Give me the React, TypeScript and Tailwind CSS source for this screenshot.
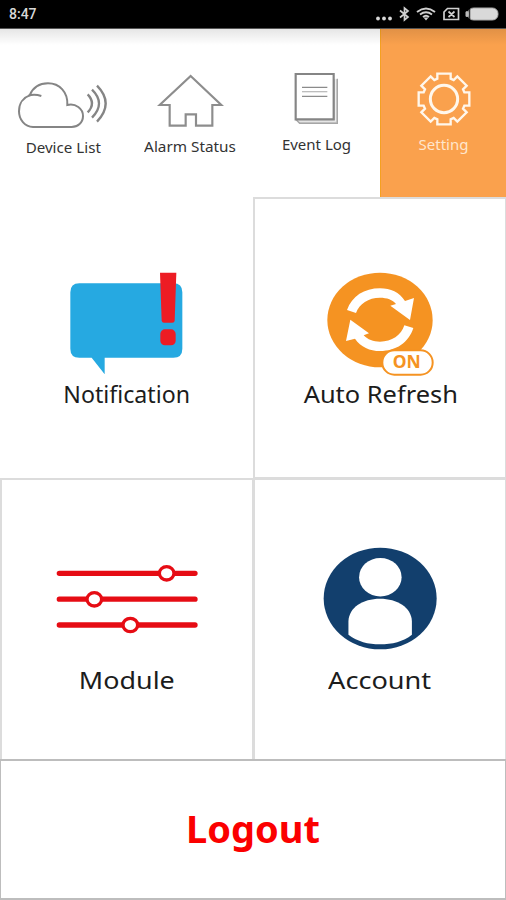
import clsx from 'clsx';
import type { ReactNode } from 'react';

const CloudIcon = () => (
  <svg viewBox="53 65 270 150" className="h-[50px] w-[90px]" fill="none" stroke="#858585" strokeWidth="6">
    <path d="M98 203 C73 202 56 181 56 156 C56 131 70 114 88 108 C98 84 119 72 143 72 C178 72 203 99 201 137 C226 131 248 148 248 170 C248 190 232 203 214 203 Z" />
    <path d="M84 109 Q102 103 123 110" />
    <path d="M262 105 Q288 132 262 159" strokeWidth="7" />
    <path d="M275 91 Q317 132 275 175" strokeWidth="7" />
    <path d="M290 79 Q342 132 290 187" strokeWidth="7" />
  </svg>
);

const HomeIcon = () => (
  <svg viewBox="81 42 201 162" className="h-[54px] w-[67px]" fill="none" stroke="#8d8d8d" strokeWidth="6.5">
    <path d="M182 48 L274 135 H247 V197 H198 V163 H167 V197 H119 V135 H89 Z" />
  </svg>
);

const BookIcon = () => (
  <svg viewBox="102 36 135 162" className="h-[54px] w-[45px]" fill="none">
    <path d="M107 178 L118 191 H232 V58 H222 V178 Z" fill="#c9c9c9" />
    <path d="M227 56 V183 H111" stroke="#eee" strokeWidth="4" />
    <path d="M232 56 V190 H119 L107 178" stroke="#a6a6a6" strokeWidth="4" />
    <path d="M107 42 H221 V178 H107 Z" fill="#fff" stroke="#858585" strokeWidth="6.5" />
    <path d="M126 82 H202 M126 109 H202" stroke="#8b8b8b" strokeWidth="4" />
    <path d="M126 95 H202" stroke="#bdbdbd" strokeWidth="4" />
  </svg>
);

const GearIcon = () => (
  <svg viewBox="-81 -81 162 162" className="size-[54px]" fill="none" stroke="#fff7ec">
    <path
      strokeWidth="7"
      d="M-20 -76 H20 V-61 L29 -57 L40 -68 L68 -40 L57 -29 L61 -20 H76 V20 H61 L57 29 L68 40 L40 68 L29 57 L20 61 V76 H-20 V61 L-29 57 L-40 68 L-68 40 L-57 29 L-61 20 H-76 V-20 H-61 L-57 -29 L-68 -40 L-40 -68 L-29 -57 L-20 -61 Z"
    />
    <circle r="41" strokeWidth="9" />
  </svg>
);

const NotificationIcon = () => (
  <svg viewBox="90 36 339 309" className="h-[103px] w-[113px]">
    <path
      fill="#26a9e1"
      d="M118 70 H400 Q427 70 427 97 V266 Q427 293 400 293 H194 V343 L155 293 H118 Q91 293 91 266 V97 Q91 70 118 70 Z"
    />
    <path fill="#ed1c24" d="M360 38 H409 L404 182 Q403 188 397 188 H372 Q366 188 365 182 Z" />
    <rect x="361" y="208" width="46" height="48" rx="14" fill="#ed1c24" />
  </svg>
);

const RefreshIcon = () => (
  <svg viewBox="112 36 321 312" className="h-[104px] w-[107px]">
    <ellipse cx="271" cy="180" rx="158" ry="142" fill="#f59322" />
    <path
      fill="#fff"
      d="M172 150 C187 108 224 85 271 85 C303 85 329 97 346 123 L373 114 L361 180 L302 137 L319 132 C309 119 292 113 271 113 C236 113 209 131 199 159 Z"
    />
    <path
      fill="#fff"
      d="M371 204 C357 248 319 273 271 273 C241 273 213 261 196 236 L169 243 L182 179 L238 220 L222 226 C234 239 251 245 271 245 C306 245 335 226 344 196 Z"
    />
    <rect x="278" y="271" width="151" height="73" rx="36" fill="#fff" stroke="#f59322" strokeWidth="6" />
    <text
      x="351"
      y="325"
      textAnchor="middle"
      textLength="84"
      lengthAdjust="spacingAndGlyphs"
      fill="#f59322"
      fontFamily="Noto Sans, sans-serif"
      fontWeight="700"
      fontSize="51"
    >
      ON
    </text>
  </svg>
);

const ModuleIcon = () => (
  <svg viewBox="48 42 426 210" className="h-[70px] w-[142px]" stroke="#e60c14">
    <path d="M58 70 H465 M58 147.5 H465 M58 225 H465" strokeWidth="16" strokeLinecap="round" />
    <g fill="#fff" strokeWidth="10">
      <ellipse cx="380" cy="70" rx="22" ry="20" />
      <ellipse cx="163" cy="148" rx="22" ry="20" />
      <ellipse cx="271" cy="225" rx="22" ry="20" />
    </g>
  </svg>
);

const AccountIcon = () => (
  <svg viewBox="99 37 345 310" className="h-[103px] w-[115px]">
    <ellipse cx="270.5" cy="192" rx="170" ry="153" fill="#123f6d" />
    <ellipse cx="271" cy="128" rx="64" ry="58" fill="#fff" />
    <path
      fill="#fff"
      d="M175 301 V260 C177 219 218 193 270 193 C322 193 364 219 366 260 V301 C340 322 306 330 270 330 C234 330 203 322 175 301 Z"
    />
  </svg>
);

const StatusBar = () => (
  <div className="flex h-[29px] items-center justify-between border-b border-[#555] bg-black pr-1.5 pl-[9px]">
    <span className="pt-px font-['Roboto',sans-serif] text-[14px] font-medium text-[#d8d8d8]">8:47</span>
    <svg viewBox="0 0 126 18" className="h-[18px] w-[126px]" fill="none" stroke="#d0d0d0">
      <g fill="#d8d8d8" stroke="none">
        <circle cx="4" cy="13.5" r="1.9" />
        <circle cx="10" cy="13.5" r="1.9" />
        <circle cx="16" cy="13.5" r="1.9" />
      </g>
      <path d="M26 5.500 L34 12 L30.500 15 V3 L34 6 L26 12.500" strokeWidth="1.7" />
      <path d="M43 7 Q52 0 61 7 M46 9.500 Q52 5 58 9.500 M49 12 Q52 9.500 55 12" strokeWidth="1.9" />
      <path d="M49.500 12.500 L52 15.500 L54.500 12.500 Z" fill="#d0d0d0" stroke="none" />
      <path d="M73.500 3.500 H84.500 V14.500 H70 V7 Z M74.500 6.500 L80.500 12 M80.500 6.500 L74.500 12" strokeWidth="1.7" />
      <rect x="94" y="3" width="30" height="12" rx="5.5" fill="#d9d9d9" stroke="#aaa" />
      <path d="M95.500 4 V14" stroke="#333" strokeWidth="1.5" />
      <rect x="91.5" y="6" width="3" height="6" rx="1.5" fill="#bbb" stroke="none" />
    </svg>
  </div>
);

interface TabProps {
  label: string;
  icon: ReactNode;
  className: string;
  labelClass: string;
}

const tabs: TabProps[] = [
  {
    label: 'Device List',
    icon: <CloudIcon />,
    className: 'pt-[52px] pr-[2px]',
    labelClass: 'mt-[6px] ml-[2px] scale-x-[1.01]',
  },
  {
    label: 'Alarm Status',
    icon: <HomeIcon />,
    className: 'pt-[45px]',
    labelClass: 'mt-[8px] scale-x-[1.02]',
  },
  {
    label: 'Event Log',
    icon: <BookIcon />,
    className: 'pt-[43px]',
    labelClass: 'mt-[8px]',
  },
  {
    label: 'Setting',
    icon: <GearIcon />,
    className: 'border-l border-[#f5a020] bg-[#faa14d] pt-[43px]',
    labelClass: 'mt-[8px] text-[#ffe6cc]',
  },
];

const Tab = ({ label, icon, className, labelClass }: TabProps) => (
  <div className={clsx('flex flex-col items-center text-[#333]', className)}>
    {icon}
    <span className={clsx('text-[15px] leading-[20px] whitespace-nowrap', labelClass)}>{label}</span>
  </div>
);

const Tile = ({ label, icon, className, labelClass }: TabProps) => (
  <div className={clsx('flex flex-col items-center border-[#dcdcdc]', className)}>
    {icon}
    <span className={clsx('text-[24px] leading-[30px] whitespace-nowrap text-[#1c1c1c]', labelClass)}>{label}</span>
  </div>
);

export default function App() {
  return (
    <div className="flex h-[900px] w-[506px] flex-col overflow-hidden bg-white font-['Noto_Sans',sans-serif]">
      <StatusBar />
      <div className="relative grid h-[168px] grid-cols-[127px_126px_127px_126px]">
        {tabs.map((tab) => (
          <Tab key={tab.label} {...tab} />
        ))}
        <div className="absolute inset-x-0 top-0 h-4 bg-linear-to-b from-black/10 to-transparent" />
      </div>
      <div className="grid h-[562px] grid-cols-[253px_253px] grid-rows-[281px_281px]">
        <Tile
          label="Notification"
          icon={<NotificationIcon />}
          className="pt-[75px]"
          labelClass="mt-[4px] scale-x-[0.965]"
        />
        <Tile
          label="Auto Refresh"
          icon={<RefreshIcon />}
          className="border-t-2 border-r border-b border-l-2 pt-[73px]"
          labelClass="mt-[3px] ml-[2px] scale-x-[1.06]"
        />
        <Tile
          label="Module"
          icon={<ModuleIcon />}
          className="border-t-2 border-r border-l-2 pt-[84px]"
          labelClass="mt-[31px] scale-x-[1.12]"
        />
        <Tile
          label="Account"
          icon={<AccountIcon />}
          className="border-t-2 border-r border-l-2 pt-[67px]"
          labelClass="mt-[15px] scale-x-[1.13]"
        />
      </div>
      <button
        type="button"
        className="flex h-[141px] items-center justify-center border-t-2 border-r border-b-2 border-l border-[#bdbdbd] pb-1"
      >
        <span className="text-[38px] leading-none font-bold text-[#fb0000]">Logout</span>
      </button>
    </div>
  );
}
